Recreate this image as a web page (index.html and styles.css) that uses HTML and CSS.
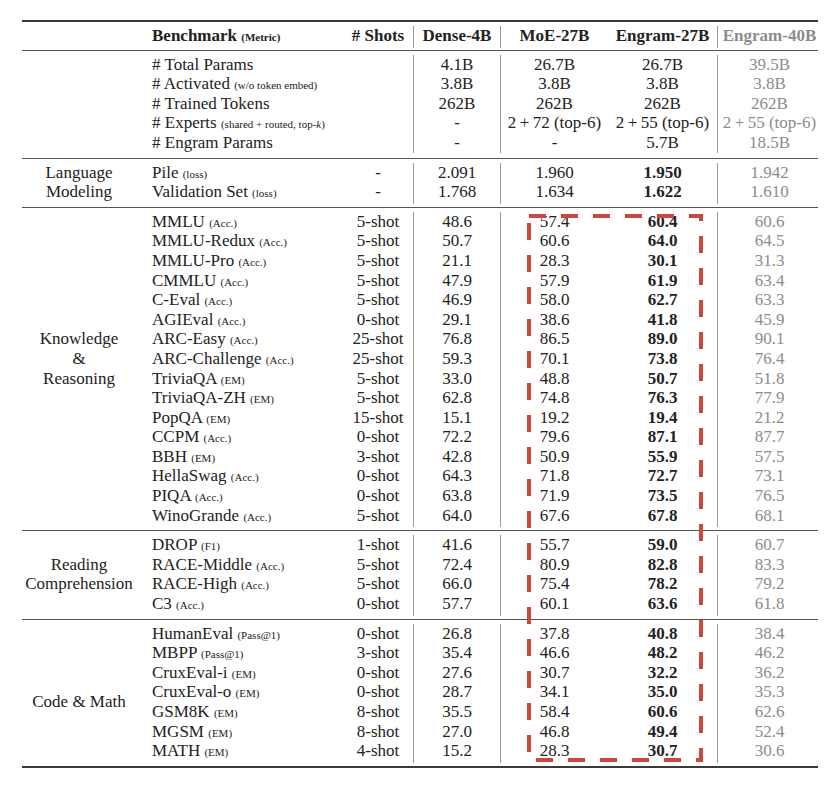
FILE: index.html
```html
<!DOCTYPE html>
<html lang="en">
<head>
  <meta charset="UTF-8">
  <meta name="viewport" content="width=device-width, initial-scale=1.0">
  <title>Engram-27B Benchmark Results</title>
  <link rel="stylesheet" href="styles.css">
</head>
<body>
  <div class="results">

    <!-- Column headings -->
    <div class="section head">
      <div class="cat"></div>
      <div class="rows">
        <div class="row"><div class="bench">Benchmark <small>(Metric)</small></div><div># Shots</div><div>Dense-4B</div><div>MoE-27B</div><div>Engram-27B</div><div>Engram-40B</div></div>
      </div>
    </div>

    <!-- Model configuration -->
    <div class="section">
      <div class="cat"></div>
      <div class="rows">
        <div class="row"><div class="bench"># Total Params</div><div></div><div>4.1B</div><div>26.7B</div><div>26.7B</div><div>39.5B</div></div>
        <div class="row"><div class="bench"># Activated <small>(w/o token embed)</small></div><div></div><div>3.8B</div><div>3.8B</div><div>3.8B</div><div>3.8B</div></div>
        <div class="row"><div class="bench"># Trained Tokens</div><div></div><div>262B</div><div>262B</div><div>262B</div><div>262B</div></div>
        <div class="row"><div class="bench"># Experts <small>(shared + routed, top-<i>k</i>)</small></div><div></div><div>-</div><div>2&thinsp;+&thinsp;72 (top-6)</div><div>2&thinsp;+&thinsp;55 (top-6)</div><div>2&thinsp;+&thinsp;55 (top-6)</div></div>
        <div class="row"><div class="bench"># Engram Params</div><div></div><div>-</div><div>-</div><div>5.7B</div><div>18.5B</div></div>
      </div>
    </div>

    <div class="section scored">
      <div class="cat">Language<br>Modeling</div>
      <div class="rows">
        <div class="row"><div class="bench">Pile <small>(loss)</small></div><div>-</div><div>2.091</div><div>1.960</div><div>1.950</div><div>1.942</div></div>
        <div class="row"><div class="bench">Validation Set <small>(loss)</small></div><div>-</div><div>1.768</div><div>1.634</div><div>1.622</div><div>1.610</div></div>
      </div>
    </div>

    <div class="section scored">
      <div class="cat up">Knowledge<br>&amp;<br>Reasoning</div>
      <div class="rows">
        <div class="row"><div class="bench">MMLU <small>(Acc.)</small></div><div>5-shot</div><div>48.6</div><div>57.4</div><div>60.4</div><div>60.6</div></div>
        <div class="row"><div class="bench">MMLU-Redux <small>(Acc.)</small></div><div>5-shot</div><div>50.7</div><div>60.6</div><div>64.0</div><div>64.5</div></div>
        <div class="row"><div class="bench">MMLU-Pro <small>(Acc.)</small></div><div>5-shot</div><div>21.1</div><div>28.3</div><div>30.1</div><div>31.3</div></div>
        <div class="row"><div class="bench">CMMLU <small>(Acc.)</small></div><div>5-shot</div><div>47.9</div><div>57.9</div><div>61.9</div><div>63.4</div></div>
        <div class="row"><div class="bench">C-Eval <small>(Acc.)</small></div><div>5-shot</div><div>46.9</div><div>58.0</div><div>62.7</div><div>63.3</div></div>
        <div class="row"><div class="bench">AGIEval <small>(Acc.)</small></div><div>0-shot</div><div>29.1</div><div>38.6</div><div>41.8</div><div>45.9</div></div>
        <div class="row"><div class="bench">ARC-Easy <small>(Acc.)</small></div><div>25-shot</div><div>76.8</div><div>86.5</div><div>89.0</div><div>90.1</div></div>
        <div class="row"><div class="bench">ARC-Challenge <small>(Acc.)</small></div><div>25-shot</div><div>59.3</div><div>70.1</div><div>73.8</div><div>76.4</div></div>
        <div class="row"><div class="bench">TriviaQA <small>(EM)</small></div><div>5-shot</div><div>33.0</div><div>48.8</div><div>50.7</div><div>51.8</div></div>
        <div class="row"><div class="bench">TriviaQA-ZH <small>(EM)</small></div><div>5-shot</div><div>62.8</div><div>74.8</div><div>76.3</div><div>77.9</div></div>
        <div class="row"><div class="bench">PopQA <small>(EM)</small></div><div>15-shot</div><div>15.1</div><div>19.2</div><div>19.4</div><div>21.2</div></div>
        <div class="row"><div class="bench">CCPM <small>(Acc.)</small></div><div>0-shot</div><div>72.2</div><div>79.6</div><div>87.1</div><div>87.7</div></div>
        <div class="row"><div class="bench">BBH <small>(EM)</small></div><div>3-shot</div><div>42.8</div><div>50.9</div><div>55.9</div><div>57.5</div></div>
        <div class="row"><div class="bench">HellaSwag <small>(Acc.)</small></div><div>0-shot</div><div>64.3</div><div>71.8</div><div>72.7</div><div>73.1</div></div>
        <div class="row"><div class="bench">PIQA <small>(Acc.)</small></div><div>0-shot</div><div>63.8</div><div>71.9</div><div>73.5</div><div>76.5</div></div>
        <div class="row"><div class="bench">WinoGrande <small>(Acc.)</small></div><div>5-shot</div><div>64.0</div><div>67.6</div><div>67.8</div><div>68.1</div></div>
      </div>
    </div>

    <div class="section scored">
      <div class="cat">Reading<br>Comprehension</div>
      <div class="rows">
        <div class="row"><div class="bench">DROP <small>(F1)</small></div><div>1-shot</div><div>41.6</div><div>55.7</div><div>59.0</div><div>60.7</div></div>
        <div class="row"><div class="bench">RACE-Middle <small>(Acc.)</small></div><div>5-shot</div><div>72.4</div><div>80.9</div><div>82.8</div><div>83.3</div></div>
        <div class="row"><div class="bench">RACE-High <small>(Acc.)</small></div><div>5-shot</div><div>66.0</div><div>75.4</div><div>78.2</div><div>79.2</div></div>
        <div class="row"><div class="bench">C3 <small>(Acc.)</small></div><div>0-shot</div><div>57.7</div><div>60.1</div><div>63.6</div><div>61.8</div></div>
      </div>
    </div>

    <div class="section scored last">
      <div class="cat down">Code &amp; Math</div>
      <div class="rows">
        <div class="row"><div class="bench">HumanEval <small>(Pass@1)</small></div><div>0-shot</div><div>26.8</div><div>37.8</div><div>40.8</div><div>38.4</div></div>
        <div class="row"><div class="bench">MBPP <small>(Pass@1)</small></div><div>3-shot</div><div>35.4</div><div>46.6</div><div>48.2</div><div>46.2</div></div>
        <div class="row"><div class="bench">CruxEval-i <small>(EM)</small></div><div>0-shot</div><div>27.6</div><div>30.7</div><div>32.2</div><div>36.2</div></div>
        <div class="row"><div class="bench">CruxEval-o <small>(EM)</small></div><div>0-shot</div><div>28.7</div><div>34.1</div><div>35.0</div><div>35.3</div></div>
        <div class="row"><div class="bench">GSM8K <small>(EM)</small></div><div>8-shot</div><div>35.5</div><div>58.4</div><div>60.6</div><div>62.6</div></div>
        <div class="row"><div class="bench">MGSM <small>(EM)</small></div><div>8-shot</div><div>27.0</div><div>46.8</div><div>49.4</div><div>52.4</div></div>
        <div class="row"><div class="bench">MATH <small>(EM)</small></div><div>4-shot</div><div>15.2</div><div>28.3</div><div>30.7</div><div>30.6</div></div>
      </div>
    </div>

    <!-- Highlight around MoE-27B vs Engram-27B scores -->
    <svg class="highlight" width="176" height="548" viewBox="0 0 176 548">
      <rect x="2" y="2" width="172" height="544" fill="none" stroke="#d0463c" stroke-width="4" stroke-dasharray="17 15"/>
    </svg>
  </div>
</body>
</html>
```

FILE: styles.css
```css
body {
  margin: 0;
  background: #fff;
  font-family: "Liberation Serif", "Times New Roman", serif;
  font-size: 17px;
  color: #222;
}
.results {
  position: relative;
  width: 796px;
  margin: 20px 0 0 22px;
  border-top: 2px solid #3a3a3a;
}
.section {
  display: flex;
  padding: 4px 0 5px;
  border-top: 1px solid #555;
}
.section.head {
  border-top: none;
  padding: 4px 0;
  font-weight: bold;
}
.section.last {
  border-bottom: 2px solid #3a3a3a;
}
.cat {
  width: 114px;
  padding-right: 9px;
  display: flex;
  align-items: center;
  justify-content: center;
  text-align: center;
  line-height: 19.6px;
}
.cat.up {
  padding-bottom: 19.6px;
}
.cat.down {
  padding-top: 19.6px;
}
.rows {
  flex: 1;
}
.row {
  display: grid;
  grid-template-columns: 198px 70px 87px 108px 109px 101px;
  height: 19.6px;
  line-height: 19.6px;
  white-space: nowrap;
  text-align: center;
}
.row > .bench {
  text-align: left;
  padding-left: 7px;
}
.row > :nth-child(3),
.row > :nth-child(4),
.row > :nth-child(6) {
  border-left: 1px solid #9a9a9a;
}
.row > :nth-child(6) {
  color: #8c8c8c;
  padding-left: 3px;
}
.scored .row > :nth-child(5) {
  font-weight: bold;
}
small {
  font-size: 11px;
}
.highlight {
  position: absolute;
  left: 505px;
  top: 192px;
}
```
